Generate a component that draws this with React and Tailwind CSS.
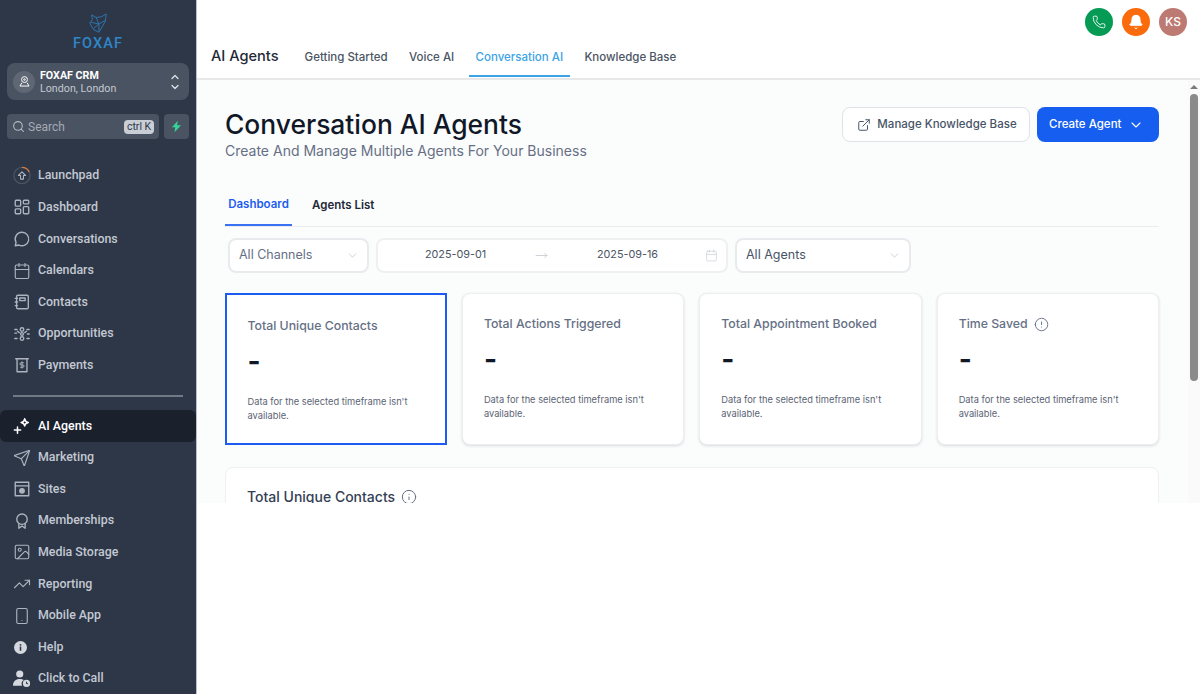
import React from "react";
import {
  Calendar,
  ChevronDown,
  ChevronUp,
  ExternalLink,
  Image,
  Info,
  MoveRight,
  Phone,
  Search,
  Send,
  Smartphone,
  TrendingUp,
  Bell,
} from "lucide-react";

const iconClass = "w-[18px] h-[18px]";

// Small hand drawn sidebar icons
function Svg({ children }) {
  return (
    <svg viewBox="0 0 20 20" fill="none" stroke="currentColor" strokeWidth="1.5" strokeLinecap="round" strokeLinejoin="round" className="w-[18px] h-[18px]">
      {children}
    </svg>
  );
}

const LaunchpadIcon = () => (
  <svg viewBox="0 0 20 20" fill="none" className="w-[19px] h-[19px]">
    <circle cx="10" cy="10" r="9" stroke="#4b5563" strokeWidth="1.4" />
    <path d="M10 1a9 9 0 0 1 8 5" stroke="#d97a3a" strokeWidth="1.4" />
    <path d="M6 10l4-4 4 4h-2.4v4H8.4v-4z" stroke="#aeb4bf" strokeWidth="1.2" strokeLinejoin="round" />
  </svg>
);
const DashboardIcon = () => (
  <Svg>
    <rect x="2.5" y="2.5" width="6" height="6.5" rx="1" />
    <rect x="11.5" y="2.5" width="6" height="4" rx="1" />
    <rect x="2.5" y="12" width="6" height="5.5" rx="1" />
    <rect x="11.5" y="9.5" width="6" height="8" rx="1" />
  </Svg>
);
const ChatIcon = () => (
  <Svg>
    <path d="M10 2.5a7.5 7.5 0 1 1-3.4 14.2L2.5 17.5l.9-3.8A7.5 7.5 0 0 1 10 2.5z" />
  </Svg>
);
const ContactsIcon = () => (
  <Svg>
    <rect x="4" y="2.5" width="13" height="15" rx="1.5" />
    <path d="M7.5 5.5h6v3h-6zM2.5 6h2.5M2.5 10h2.5M2.5 14h2.5" />
  </Svg>
);
const OpportunitiesIcon = () => (
  <Svg>
    <circle cx="10" cy="5" r="2" />
    <circle cx="10" cy="10" r="1.6" />
    <circle cx="10" cy="15" r="2" />
    <path d="M2 5h2.5M2 9h2M2 15h2.5M15.5 5H18M16 10h2M15.5 15H18M5 7l2 1.5M15 7l-2 1.5" />
  </Svg>
);
const PaymentsIcon = () => (
  <Svg>
    <path d="M3 3h14M4.5 3v14.500h11V3" />
    <path d="M11.500 7.500H9a1.200 1.200 0 0 0 0 2.500h2a1.200 1.200 0 0 1 0 2.500H8.500M10 6.500v7" strokeWidth="1.100" />
  </Svg>
);
const AgentsIcon = () => (
  <svg viewBox="0 0 20 20" fill="none" stroke="white" strokeWidth="1.7" strokeLinejoin="round" strokeLinecap="round" className="w-[18px] h-[18px]">
    <path d="M13 2c.4 2.500 1.500 3.600 4 4-2.500.4-3.600 1.500-4 4-.4-2.500-1.500-3.600-4-4 2.500-.4 3.600-1.500 4-4z" />
    <path d="M5 11v7M1.500 14.500h7" />
  </svg>
);
const SitesIcon = () => (
  <Svg>
    <rect x="2.500" y="2.500" width="15" height="15" />
    <path d="M2.500 6.500h15" />
    <circle cx="10" cy="12" r="2.500" fill="currentColor" />
  </Svg>
);
const MembershipIcon = () => (
  <Svg>
    <circle cx="10" cy="8" r="5.800" />
    <path d="M6.500 13v5l3.500-2.500 3.500 2.500v-5" />
  </Svg>
);
const HelpIcon = () => (
  <svg viewBox="0 0 20 20" className="w-[13px] h-[13px] mr-[4px]">
    <circle cx="10" cy="10" r="10" fill="#d5d8de" />
    <rect x="8.800" y="8.500" width="2.400" height="6.500" fill="#2d3748" />
    <rect x="8.800" y="4.800" width="2.400" height="2.400" fill="#2d3748" />
  </svg>
);
const CallIcon = () => (
  <svg viewBox="0 0 20 20" className="w-[19px] h-[19px]">
    <circle cx="7.500" cy="5" r="4" fill="#d5d8de" />
    <path d="M0 18c0-5 3-7.500 7.500-7.500 2 0 3.500.4 4.700 1.300A5 5 0 0 0 10 18H0z" fill="#d5d8de" />
    <circle cx="15" cy="15.500" r="4" fill="#d5d8de" />
    <path d="M15 13.500v2.200h1.800" stroke="#2d3748" strokeWidth="1.100" fill="none" />
  </svg>
);

const topItems = [
  { label: "Launchpad", icon: <LaunchpadIcon /> },
  { label: "Dashboard", icon: <DashboardIcon /> },
  { label: "Conversations", icon: <ChatIcon /> },
  { label: "Calendars", icon: <Calendar className={iconClass} strokeWidth={1.500} /> },
  { label: "Contacts", icon: <ContactsIcon /> },
  { label: "Opportunities", icon: <OpportunitiesIcon /> },
  { label: "Payments", icon: <PaymentsIcon /> },
];

const bottomItems = [
  { label: "AI Agents", icon: <AgentsIcon />, active: true },
  { label: "Marketing", icon: <Send className={iconClass} strokeWidth={1.500} /> },
  { label: "Sites", icon: <SitesIcon /> },
  { label: "Memberships", icon: <MembershipIcon /> },
  { label: "Media Storage", icon: <Image className={iconClass} strokeWidth={1.500} /> },
  { label: "Reporting", icon: <TrendingUp className={iconClass} strokeWidth={1.500} /> },
  { label: "Mobile App", icon: <Smartphone className={iconClass} strokeWidth={1.500} /> },
  { label: "Help", icon: <HelpIcon /> },
  { label: "Click to Call", icon: <CallIcon /> },
];

const stats = [
  { title: "Total Unique Contacts", selected: true },
  { title: "Total Actions Triggered" },
  { title: "Total Appointment Booked" },
  { title: "Time Saved", info: true },
];

function NavItem({ item }) {
  return (
    <div
      className={`flex items-center h-[31.6px] pl-[13px] gap-[7px] text-[12.4px] font-medium ${
        item.active ? "bg-[#1a202c] text-white rounded-md" : "text-[#c3c8d2]"
      }`}
    >
      <span className="w-[18px] flex justify-center text-[#aeb4bf]">{item.icon}</span>
      <span>{item.label}</span>
    </div>
  );
}

function Sidebar() {
  return (
    <aside className="w-[197px] h-[694px] shrink-0 bg-[#2d3748] border-r border-[#b9bec8] overflow-hidden font-['Roboto',sans-serif]">
      <div className="flex flex-col items-center pt-[13px]">
        <svg viewBox="0 0 24 24" fill="none" stroke="#2f78b0" strokeWidth="1" strokeLinejoin="round" className="w-[22px] h-[22px]">
          <path d="M5 2l5 3 6-1 5-3-1 8-7 12-6-3-4-7 3-4-1-5zM10 5l3 7 7-4M4 10l9 2v8M7 17l6-5" />
        </svg>
        <span className="mt-[1px] text-[14.500px] leading-[16px] tracking-[1.100px] font-medium text-[#2f86c9]">FOXAF</span>
      </div>

      <div className="mx-[7px] mt-[11px] h-[37px] rounded-lg bg-[#4a5361] flex items-center pl-[6px] pr-[8px]">
        <div className="w-[22px] h-[22px] rounded-full bg-[#5f6774] flex items-center justify-center text-white">
          <svg viewBox="0 0 20 20" fill="none" stroke="currentColor" strokeWidth="1.500" className="w-[13px] h-[13px]">
            <circle cx="10" cy="7" r="4.500" />
            <circle cx="10" cy="7" r="1.200" />
            <path d="M6 12l-3 5h14l-3-5" strokeLinejoin="round" />
          </svg>
        </div>
        <div className="ml-[5px] flex-1 min-w-0">
          <div className="text-[10.700px] leading-[13px] font-bold text-white">FOXAF CRM</div>
          <div className="text-[10.700px] leading-[13px] text-[#c3c8d2]">London, London</div>
        </div>
        <div className="flex flex-col text-[#dfe2e7]">
          <ChevronUp className="w-[12px] h-[12px] -mb-[1px]" strokeWidth={2.500} />
          <ChevronDown className="w-[12px] h-[12px] -mt-[1px]" strokeWidth={2.500} />
        </div>
      </div>

      <div className="mx-[7px] mt-[14px] flex gap-[5px]">
        <div className="w-[153px] h-[25px] rounded bg-[#4a5361] flex items-center pl-[5px] pr-[5px]">
          <Search className="w-[13px] h-[13px] text-[#b4b9c3]" strokeWidth={2} />
          <span className="ml-[3px] flex-1 text-[12px] text-[#a4aab5]">Search</span>
          <span className="px-[3px] h-[14px] leading-[14px] rounded-sm bg-[#c9ced6] text-[#2d3748] text-[10.500px]">ctrl K</span>
        </div>
        <div className="w-[25px] h-[25px] rounded bg-[#4a5361] flex items-center justify-center">
          <svg viewBox="0 0 20 20" className="w-[13px] h-[13px]">
            <path d="M12 1L3 11h5l-1 8 10-11h-6z" fill="#34d399" />
          </svg>
        </div>
      </div>

      <nav className="mt-[21px]">
        {topItems.map((item) => (
          <NavItem key={item.label} item={item} />
        ))}
      </nav>

      <div className="mx-[13px] mt-[14px] mb-[13px] h-[2px] bg-[#727986]" />

      <nav>
        {bottomItems.map((item) => (
          <NavItem key={item.label} item={item} />
        ))}
      </nav>
    </aside>
  );
}

function Header() {
  const tabs = ["Getting Started", "Voice AI", "Conversation AI", "Knowledge Base"];
  return (
    <header className="h-[80px] shrink-0 bg-white border-b-2 border-[#e7e8ea] relative">
      <div className="absolute right-[13px] top-[8px] flex gap-[9px]">
        <div className="w-[28px] h-[28px] rounded-full bg-[#059b55] flex items-center justify-center text-white">
          <Phone className="w-[14px] h-[14px]" strokeWidth={1.500} />
        </div>
        <div className="w-[28px] h-[28px] rounded-full bg-[#fb6a0b] flex items-center justify-center text-white">
          <Bell className="w-[16px] h-[16px]" fill="white" strokeWidth={1.500} />
        </div>
        <div className="w-[28px] h-[28px] rounded-full bg-[#bc7a72] flex items-center justify-center text-white text-[12px] font-medium">
          KS
        </div>
      </div>
      <div className="h-full flex items-end pl-[14px]">
        <div className="text-[14.600px] font-medium text-[#1f2937] pb-[10px] mr-[19px]">AI Agents</div>
        <div className="flex gap-[7.400px]">
          {tabs.map((tab) => (
            <div
              key={tab}
              className={`h-[36px] px-[7px] flex items-center text-[11.500px] font-medium border-b-2 mb-[1px] ${
                tab === "Conversation AI" ? "text-[#3ba3e6] border-[#3ba3e6]" : "text-[#4b5563] border-transparent"
              }`}
            >
              {tab}
            </div>
          ))}
        </div>
      </div>
    </header>
  );
}

function StatCard({ stat }) {
  return (
    <div
      className={`bg-white h-[152px] px-[21px] ${
        stat.selected
          ? "border-2 border-[#1d5cf0] pt-[23px]"
          : "border border-[#eceef1] rounded-lg shadow-[0_1px_3px_rgba(16,24,40,0.14)] pt-[22px]"
      }`}
    >
      <div className="flex items-center gap-[6px] text-[12.300px] leading-[16px] font-medium text-[#667085]">
        {stat.title}
        {stat.info && <Info className="w-[15px] h-[15px] rotate-180" strokeWidth={1.500} />}
      </div>
      <div className="mt-[11px] text-[28px] leading-[32px] font-bold text-[#101828]">-</div>
      <div className="mt-[18px] text-[9.300px] leading-[14px] text-[#5b6474]">
        Data for the selected timeframe isn't available.
      </div>
    </div>
  );
}

function Filter({ label, className }) {
  return (
    <div className={`h-[35px] rounded-lg bg-white border-2 border-[#e8eaed] flex items-center justify-between pl-[9px] pr-[8px] text-[12.500px] ${className}`}>
      <span>{label}</span>
      <ChevronDown className="w-[13px] h-[13px] text-[#c4c8cf]" strokeWidth={1.500} />
    </div>
  );
}

export default function App() {
  return (
    <div className="flex w-[1200px] h-[694px] overflow-hidden bg-white font-['Inter',sans-serif]">
      <Sidebar />
      <div className="flex-1 min-w-0 flex flex-col">
        <Header />
        <div className="h-[423px] flex bg-[#fbfcfc] overflow-hidden">
          <main className="flex-1 min-w-0 pl-[28px] pr-[29px]">
            <div className="flex justify-between pt-[27px]">
              <div>
                <h1 className="text-[26.400px] leading-[34px] font-medium text-[#101828]">Conversation AI Agents</h1>
                <p className="mt-[1px] text-[14px] leading-[17px] text-[#667085]">Create And Manage Multiple Agents For Your Business</p>
              </div>
              <div className="flex gap-[7px]">
                <button className="w-[188px] h-[35px] rounded-lg bg-white border border-[#dfe2e7] flex items-center justify-center gap-[6px] pl-[2px] text-[11.500px] font-medium text-[#475467]">
                  <ExternalLink className="w-[14px] h-[14px]" strokeWidth={1.700} />
                  Manage Knowledge Base
                </button>
                <button className="w-[122px] h-[35px] rounded-lg bg-[#155eef] flex items-center pl-[12px] gap-[7px] text-[11.500px] font-medium text-white">
                  Create Agent
                  <ChevronDown className="w-[16px] h-[16px]" strokeWidth={1.700} />
                </button>
              </div>
            </div>

            <div className="mt-[27px] flex border-b border-[#eaecf0] text-[11.500px] font-semibold">
              <div className="w-[67px] h-[40px] flex items-center justify-center text-[#1d5cf0] border-b-2 border-[#3b72f3] -mb-[1px]">Dashboard</div>
              <div className="ml-[20px] h-[40px] flex items-center text-[#1f2937]">Agents List</div>
            </div>

            <div className="mt-[11px] ml-[3px] flex gap-[7px] text-[#667085]">
              <Filter label="All Channels" className="w-[141px]" />
              <div className="w-[352px] h-[35px] rounded-lg bg-white border-2 border-[#eef0f2] flex items-center pr-[8px] text-[10.800px]">
                <span className="w-[155px] text-center text-[#4b5563]">2025-09-01</span>
                <MoveRight className="w-[13px] h-[13px] ml-[2px] text-[#c4c8cf]" strokeWidth={1.500} />
                <span className="flex-1 text-center text-[#4b5563] pl-[2px]">2025-09-16</span>
                <Calendar className="w-[13px] h-[13px] text-[#d0d4da]" strokeWidth={1.500} />
              </div>
              <Filter label="All Agents" className="w-[176px] text-[#475467]" />
            </div>

            <div className="mt-[20px] -ml-[0.500px] grid grid-cols-4 gap-[15px]">
              {stats.map((stat) => (
                <StatCard key={stat.title} stat={stat} />
              ))}
            </div>

            <div className="mt-[22px] h-[80px] bg-white border border-[#eef0f2] rounded-lg px-[21px] pt-[20px]">
              <div className="flex items-center gap-[6px] text-[14px] leading-[18px] font-medium text-[#344054]">
                Total Unique Contacts
                <Info className="w-[16px] h-[16px] text-[#667085]" strokeWidth={1.500} />
              </div>
            </div>
          </main>

          <div className="w-[12px] shrink-0 bg-[#fafafa] flex flex-col items-center pt-[5px]">
            <div className="w-0 h-0 border-x-[4px] border-x-transparent border-b-[4px] border-b-[#7a7a7a]" />
            <div className="mt-[5px] w-[8px] h-[287px] rounded-full bg-[#8a8a8a]" />
          </div>
        </div>
        <div className="flex-1 bg-white" />
      </div>
    </div>
  );
}
